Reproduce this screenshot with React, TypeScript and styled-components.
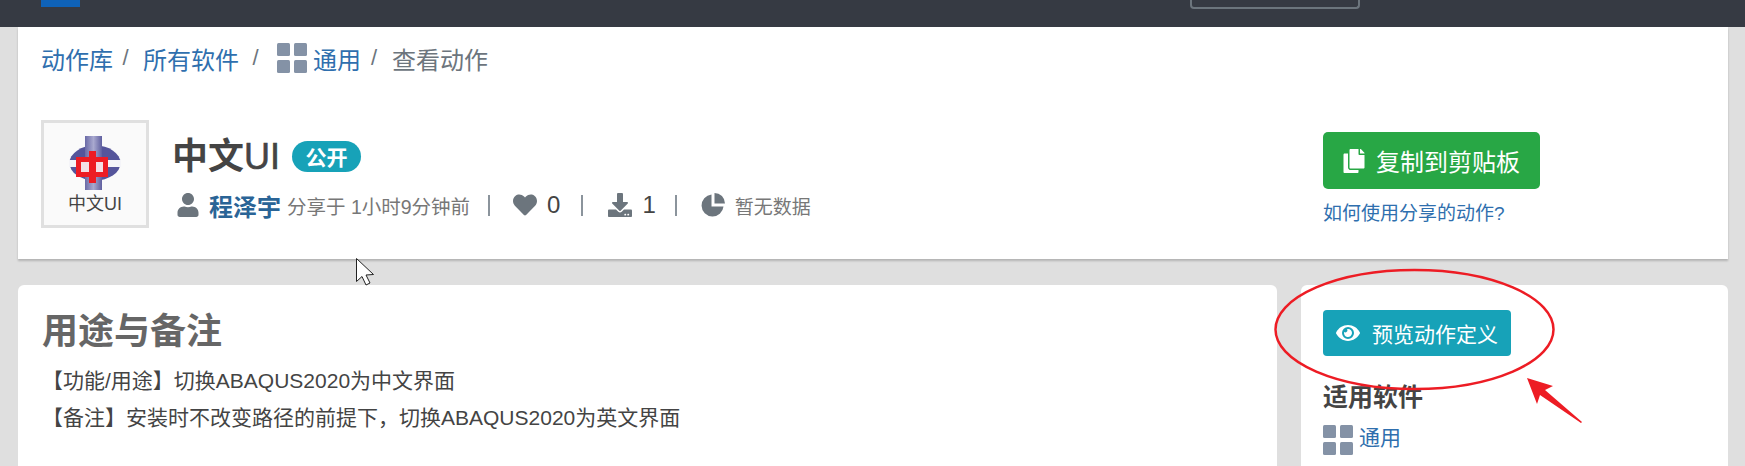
import React from "react";
import styled, { createGlobalStyle } from "styled-components";
import { FaCopy, FaDownload, FaEye, FaHeart, FaUser } from "react-icons/fa";

const GlobalStyle = createGlobalStyle`
  html, body {
    margin: 0;
    padding: 0;
    height: 466px;
    overflow: hidden;
    background: #dfdfdf;
    font-family: "Liberation Sans", "Noto Sans CJK SC", sans-serif;
  }
`;

const Page = styled.div`
  position: relative;
  width: 1745px;
  height: 466px;
  overflow: hidden;
`;

const NavBar = styled.header`
  display: flex;
  justify-content: space-between;
  align-items: flex-start;
  height: 27px;
  padding: 0 385px 0 41px;
  background: #363a43;
`;

const NavLogo = styled.div`
  width: 39px;
  height: 7px;
  background: #0f62b8;
`;

const NavButton = styled.div`
  width: 166px;
  height: 7px;
  border: 2px solid #6c757d;
  border-top: 0;
  border-radius: 0 0 4px 4px;
`;

const Content = styled.main`
  padding: 0 17px 0 18px;
`;

const TopCard = styled.section`
  height: 232px;
  box-sizing: border-box;
  padding: 16px 23px 0;
  background: #fff;
  box-shadow: 0 2px 2px rgba(0, 0, 0, 0.2);
`;

const Breadcrumb = styled.nav`
  display: flex;
  align-items: center;
  height: 30px;
  font-size: 24px;
  color: #6c757d;
`;

const Crumb = styled.a`
  color: #2f6fae;
  text-decoration: none;
`;

const Slash = styled.span<{ $width: number }>`
  box-sizing: border-box;
  width: ${(props) => props.$width}px;
  padding-right: 5px;
  text-align: center;
  font-size: 22px;
  color: #6c757d;
`;

const GridSvg = styled.svg`
  width: 30px;
  height: 30px;
  margin-right: 6px;
  flex-shrink: 0;
  fill: #8492a6;
`;

const Summary = styled.div`
  display: flex;
  align-items: flex-start;
  margin-top: 47px;
`;

const LogoBox = styled.div`
  display: flex;
  flex-direction: column;
  align-items: center;
  box-sizing: border-box;
  width: 108px;
  height: 108px;
  padding-top: 13px;
  border: 3px solid #e0e0e0;
  background: #fafafa;
  flex-shrink: 0;
`;

const LogoCaption = styled.div`
  font-size: 18px;
  line-height: 24px;
  margin-top: 2px;
  color: #444;
`;

const Info = styled.div`
  margin-left: 23px;
  flex: 1;
`;

const TitleRow = styled.div`
  display: flex;
  align-items: center;
  height: 50px;
  margin-top: 8px;
`;

const Title = styled.h1`
  margin: 0;
  font-size: 36px;
  font-weight: 700;
  color: #444;
`;

const TitleLatin = styled.span`
  font-weight: 400;
  -webkit-text-stroke: 0.6px #444;
`;

const Badge = styled.span`
  display: flex;
  align-items: center;
  justify-content: center;
  width: 69px;
  height: 31px;
  margin: 6px 0 0 12px;
  border-radius: 16px;
  background: #17a2b8;
  color: #fff;
  font-size: 21px;
  font-weight: 700;
`;

const MetaRow = styled.div`
  display: flex;
  align-items: center;
  height: 30px;
  margin-top: 12px;
  padding-left: 4px;
  color: #777;
  font-size: 19.5px;
`;

const MetaIcon = styled.span<{ $left?: number }>`
  display: flex;
  margin-left: ${(props) => props.$left ?? 0}px;
  color: #6c757d;
  font-size: 24px;
`;

const Author = styled.a`
  margin: 0 6px 0 9px;
  color: #2a6496;
  font-size: 24px;
  font-weight: 700;
`;

const Count = styled.span`
  margin-left: 10px;
  font-size: 24px;
  color: #444;
`;

const Divider = styled.span<{ $left: number }>`
  width: 2px;
  height: 21px;
  margin-left: ${(props) => props.$left}px;
  background: #8b949c;
`;

const Muted = styled.span`
  margin-left: 10px;
  font-size: 19px;
`;

const Actions = styled.div`
  width: 217px;
  margin: 12px 165px 0 0;
`;

const CopyButton = styled.button`
  display: flex;
  align-items: center;
  gap: 10px;
  width: 217px;
  height: 57px;
  padding: 0 0 0 19px;
  border: 0;
  border-radius: 5px;
  background: #28a745;
  color: #fff;
  font: inherit;
  font-size: 24px;
`;

const HelpLink = styled.a`
  display: block;
  margin-top: 12px;
  color: #2f6fae;
  font-size: 19px;
  line-height: 26px;
`;

const Columns = styled.div`
  display: grid;
  grid-template-columns: 1259px 427px;
  gap: 24px;
  margin-top: 26px;
`;

const Panel = styled.section`
  height: 200px;
  border-radius: 6px 6px 0 0;
  background: #fff;
`;

const NotesPanel = styled(Panel)`
  padding: 23px 24px;
`;

const NotesHeading = styled.h2`
  margin: 0 0 6px;
  font-size: 36px;
  line-height: 48px;
  font-weight: 700;
  color: #666;
`;

const NoteLine = styled.p`
  margin: 0;
  font-size: 21px;
  line-height: 37px;
  color: #444;
`;

const SidePanel = styled(Panel)`
  padding: 25px 22px;
`;

const PreviewButton = styled.button`
  display: flex;
  align-items: center;
  gap: 12px;
  box-sizing: border-box;
  width: 188px;
  height: 46px;
  padding: 0 0 0 13px;
  border: 0;
  border-radius: 4px;
  background: #17a2b8;
  color: #fff;
  font: inherit;
  font-size: 21px;
`;

const SideHeading = styled.h3`
  margin: 25px 0 12px;
  font-size: 25px;
  line-height: 32px;
  font-weight: 700;
  color: #444;
`;

const SoftwareLink = styled.a`
  display: flex;
  align-items: flex-start;
  color: #2f6fae;
  font-size: 21px;
  line-height: 26px;
`;

const Overlay = styled.svg`
  position: absolute;
  top: 0;
  left: 0;
  pointer-events: none;
`;

function GridIcon() {
  return (
    <GridSvg viewBox="0 0 30 30">
      <rect x="0" y="0" width="13" height="13" rx="1.5" />
      <rect x="17" y="0" width="13" height="13" rx="1.5" />
      <rect x="0" y="17" width="13" height="13" rx="1.5" />
      <rect x="17" y="17" width="13" height="13" rx="1.5" />
    </GridSvg>
  );
}

function PieIcon() {
  return (
    <svg width="24" height="24" viewBox="0 0 24 24" fill="currentColor">
      <path d="M10.5 1.5V13.5H22.5A11 11 0 1 1 10.5 1.5Z" />
      <path d="M13.5 0A10.5 10.5 0 0 1 24 10.5H13.5Z" />
    </svg>
  );
}

function LogoMark() {
  return (
    <svg width="52" height="54" viewBox="0 0 52 54">
      <defs>
        <linearGradient id="shaft" x1="0" x2="1" y1="0" y2="0">
          <stop offset="0" stopColor="#6a6aa6" />
          <stop offset="0.5" stopColor="#a9a9cf" />
          <stop offset="1" stopColor="#5f5f9f" />
        </linearGradient>
      </defs>
      <ellipse cx="26" cy="27" rx="25.5" ry="17.5" fill="#55559b" />
      <rect x="0" y="24" width="52" height="7" fill="#f4f4f8" />
      <rect x="16" y="0" width="17" height="54" fill="url(#shaft)" />
      <rect x="7" y="21" width="32" height="20" fill="#ed1c24" />
      <rect x="20" y="15" width="7" height="32" fill="#ed1c24" />
      <rect x="12" y="26" width="8" height="10" fill="#f3dfe6" />
      <rect x="27" y="26" width="7" height="10" fill="#f3dfe6" />
    </svg>
  );
}

function App() {
  return (
    <Page>
      <GlobalStyle />
      <NavBar>
        <NavLogo />
        <NavButton />
      </NavBar>
      <Content>
        <TopCard>
          <Breadcrumb>
            <Crumb>动作库</Crumb>
            <Slash $width={30}>/</Slash>
            <Crumb>所有软件</Crumb>
            <Slash $width={38}>/</Slash>
            <GridIcon />
            <Crumb>通用</Crumb>
            <Slash $width={31}>/</Slash>
            <span>查看动作</span>
          </Breadcrumb>
          <Summary>
            <LogoBox>
              <LogoMark />
              <LogoCaption>中文UI</LogoCaption>
            </LogoBox>
            <Info>
              <TitleRow>
                <Title>
                  中文<TitleLatin>UI</TitleLatin>
                </Title>
                <Badge>公开</Badge>
              </TitleRow>
              <MetaRow>
                <MetaIcon>
                  <FaUser />
                </MetaIcon>
                <Author>程泽宇</Author>
                <span>分享于 1小时9分钟前</span>
                <Divider $left={18} />
                <MetaIcon $left={23}>
                  <FaHeart />
                </MetaIcon>
                <Count>0</Count>
                <Divider $left={21} />
                <MetaIcon $left={25}>
                  <FaDownload />
                </MetaIcon>
                <Count>1</Count>
                <Divider $left={19} />
                <MetaIcon $left={24}>
                  <PieIcon />
                </MetaIcon>
                <Muted>暂无数据</Muted>
              </MetaRow>
            </Info>
            <Actions>
              <CopyButton>
                <FaCopy size={24} />
                复制到剪贴板
              </CopyButton>
              <HelpLink>如何使用分享的动作?</HelpLink>
            </Actions>
          </Summary>
        </TopCard>
        <Columns>
          <NotesPanel>
            <NotesHeading>用途与备注</NotesHeading>
            <NoteLine>【功能/用途】切换ABAQUS2020为中文界面</NoteLine>
            <NoteLine>【备注】安装时不改变路径的前提下，切换ABAQUS2020为英文界面</NoteLine>
          </NotesPanel>
          <SidePanel>
            <PreviewButton>
              <FaEye size={24} />
              预览动作定义
            </PreviewButton>
            <SideHeading>适用软件</SideHeading>
            <SoftwareLink>
              <GridIcon />
              通用
            </SoftwareLink>
          </SidePanel>
        </Columns>
      </Content>
      {/* hand-drawn markup on top of the screenshot */}
      <Overlay width="1745" height="466" viewBox="0 0 1745 466">
        <ellipse cx="1414.5" cy="329.5" rx="139" ry="59.5" fill="none" stroke="#ed1c24" strokeWidth="2.5" />
        <path d="M1527 378L1553 386L1545 390L1582 422L1581 423L1540 395L1537 404Z" fill="#ed1c24" />
        <path
          d="M356.5 258.5V281.5L362 276.5L366 285L370 283L366 275L373.5 274.5Z"
          fill="#fff"
          stroke="#222"
          strokeWidth="1"
        />
      </Overlay>
    </Page>
  );
}

export default App;
